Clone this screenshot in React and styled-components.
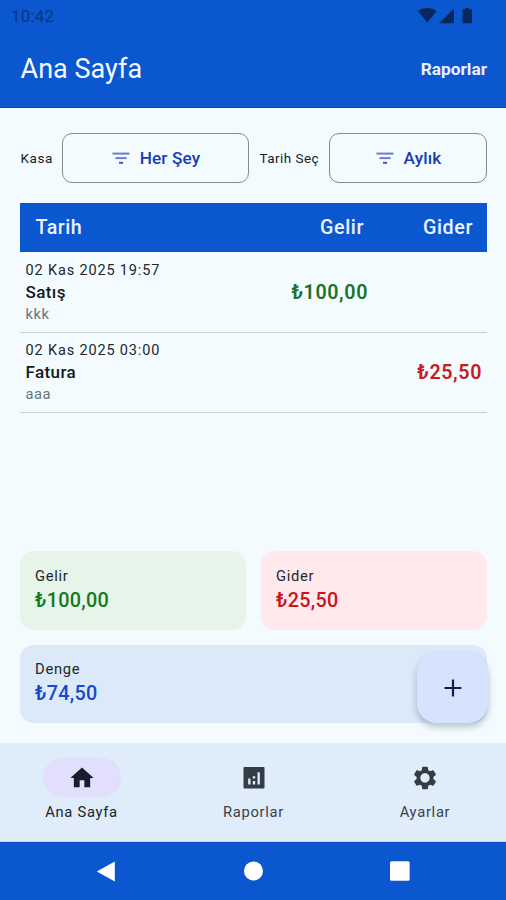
import React from "react";
import styled, { createGlobalStyle } from "styled-components";

const GlobalStyle = createGlobalStyle`
  * { box-sizing: border-box; }
  body { margin: 0; background: #f3fbff; }
`;

const blue = "#0a57d0";

const Screen = styled.div`
  width: 506px;
  height: 900px;
  display: flex;
  flex-direction: column;
  background: #f3fbff;
  font-family: Roboto, "Noto Sans", sans-serif;
  color: #1b2024;
  overflow: hidden;
`;

const Text = styled.span`
  display: block;
  white-space: nowrap;
  font-size: ${(p) => p.$size}px;
  line-height: ${(p) => p.$line || 20}px;
  font-weight: ${(p) => p.$weight || 400};
  letter-spacing: ${(p) => p.$track || 0}px;
  color: ${(p) => p.$color || "inherit"};
`;

const Header = styled.header`
  height: 108px;
  flex: none;
  background: ${blue};
  border-bottom: 1px solid #0747bd;
`;

const StatusBar = styled.div`
  height: 32px;
  padding: 0 33px 0 11px;
  display: flex;
  justify-content: space-between;
  align-items: center;
`;

const AppBar = styled.div`
  height: 74px;
  padding: 0 19px 0 20.5px;
  display: flex;
  justify-content: space-between;
  align-items: center;
`;

const Main = styled.main`
  flex: 1;
  min-height: 0;
  padding: 25px 19px 20px 20px;
  display: flex;
  flex-direction: column;
`;

const Filters = styled.div`
  display: grid;
  grid-template-columns: 42px 187px 80px 158px;
  align-items: center;
  height: 50px;
`;

const FilterLabel = styled(Text)`
  padding-left: ${(p) => p.$inset || 0}px;
`;

const FilterButton = styled.button`
  height: 50px;
  padding: 0 0 1px 1px;
  border: 1px solid #858a8c;
  border-radius: 10px;
  background: transparent;
  display: flex;
  align-items: center;
  justify-content: center;
  gap: 10px;
  font-family: inherit;
  color: #173db5;
`;

const TableHead = styled.div`
  margin-top: 20px;
  height: 49px;
  flex: none;
  background: ${blue};
  color: #eef3ff;
  padding: 0 14px 0 15.5px;
  display: grid;
  grid-template-columns: 1fr 100px 109px;
  align-items: center;
  text-align: right;

  & > :first-child { text-align: left; }
`;

const Row = styled.div`
  height: ${(p) => p.$height}px;
  flex: none;
  padding: ${(p) => p.$top}px 5px 0 5.5px;
  display: grid;
  grid-template-columns: 1fr 110px 114px;
  align-items: start;
  border-bottom: 1px solid #c8d0d5;
`;

const Amount = styled(Text)`
  text-align: right;
  padding-top: 22px;
`;

const Spacer = styled.div`
  flex: 1;
`;

const Cards = styled.div`
  display: grid;
  grid-template-columns: 226px 226px;
  gap: 15px;
  position: relative;
`;

const Card = styled.section`
  height: ${(p) => (p.$wide ? 78 : 79)}px;
  border-radius: 14px;
  background: ${(p) => p.$bg};
  padding: ${(p) => (p.$wide ? 14 : 15)}px 15px 0;
  grid-column: ${(p) => (p.$wide ? "1 / -1" : "auto")};
`;

const Fab = styled.button`
  position: absolute;
  right: -1px;
  bottom: 0;
  width: 71px;
  height: 70px;
  padding: 0;
  border: 0;
  border-radius: 20px;
  background: #d5e3ff;
  box-shadow: 0 4px 6px rgba(20, 40, 60, 0.2), 0 3px 10px rgba(20, 40, 60, 0.08);
  display: flex;
  align-items: center;
  justify-content: center;
`;

const Tabs = styled.nav`
  height: 99px;
  flex: none;
  background: #dfecf9;
  padding-top: 15px;
  display: grid;
  grid-template-columns: 163px 181px 162px;
  border-bottom: 1px solid #c5d9f3;
`;

const Tab = styled.div`
  display: flex;
  flex-direction: column;
  align-items: center;
  gap: 5px;
`;

const Pill = styled.div`
  width: 78px;
  height: 39px;
  border-radius: 20px;
  background: ${(p) => (p.$active ? "#e1dffc" : "transparent")};
  display: flex;
  align-items: center;
  justify-content: center;
`;

const SystemBar = styled.footer`
  height: 58px;
  flex: none;
  background: ${blue};
  border-top: 1px solid #0a4cc0;
  padding: 0 96px 1px;
  display: flex;
  align-items: center;
  justify-content: space-between;
`;

const FilterIcon = () => (
  <svg width="18" height="14" viewBox="0 0 18 14" fill="none" stroke="#6c7bd0" strokeWidth="2">
    <path d="M0.5 2.6H17.5" />
    <path d="M3.5 7.1H14.5" />
    <path d="M7 11.8H11" stroke="#3c55c4" />
  </svg>
);

const StatusIcons = () => (
  <svg width="55" height="18" viewBox="0 0 55 18" fill="#07275d">
    <path d="M0 4.1C5.4-.2 13.2-.2 18.6 4.1L9.3 15.5Z" />
    <path d="M36 1.5V16.3H21Z" />
    <path d="M47 1H51V2.2H54V16.3H44.5V2.2H47Z" />
  </svg>
);

const ICONS = {
  home: "M10 20v-6h4v6h5v-8h3L12 3 2 12h3v8z",
  chart:
    "M20.3 2.5H3.7c-.4 0-.7.3-.7.7v17.100c0 .4.3.7.7.7h16.600c.4 0 .7-.3.7-.7V3.200c0-.4-.3-.7-.7-.7zM9 17.500H7v-5h2v5zm4 0h-2v-3h2v3zm0-5h-2v-2h2v2zm4 5h-2V7h2v10.500z",
  gear: "M19.140 12.940c.04-.3.060-.61.060-.94 0-.32-.02-.64-.07-.94l2.030-1.580c.18-.14.230-.41.120-.61l-1.920-3.320c-.12-.22-.37-.29-.59-.22l-2.390.96c-.5-.38-1.030-.7-1.620-.94l-.36-2.540c-.04-.24-.24-.41-.48-.41h-3.840c-.24 0-.43.170-.47.410l-.36 2.540c-.59.240-1.130.570-1.620.940l-2.390-.96c-.22-.08-.47 0-.59.220L2.740 8.870c-.12.210-.08.470.120.610l2.030 1.580c-.05.3-.09.630-.09.940s.02.640.070.940l-2.030 1.580c-.18.140-.23.410-.12.610l1.920 3.320c.12.220.37.290.59.220l2.390-.96c.5.380 1.030.7 1.620.940l.36 2.540c.05.240.24.410.48.410h3.840c.24 0 .44-.17.470-.41l.36-2.540c.59-.24 1.130-.56 1.620-.94l2.390.960c.22.080.47 0 .59-.22l1.920-3.320c.12-.22.070-.47-.12-.61l-2.010-1.580zM12 16c-2.200 0-4-1.800-4-4s1.800-4 4-4 4 1.800 4 4-1.800 4-4 4z",
};

const TabIcon = ({ name, color }) => (
  <svg width="28" height="28" viewBox="0 0 24 24" fill={color}>
    <path d={ICONS[name]} />
  </svg>
);

const rows = [
  { date: "02 Kas 2025 19:57", name: "Satış", note: "kkk", income: "₺100,00", height: 81, top: 9 },
  { date: "02 Kas 2025 03:00", name: "Fatura", note: "aaa", expense: "₺25,50", height: 80, top: 8 },
];

const cards = [
  { label: "Gelir", value: "₺100,00", bg: "#e7f4e9", color: "#137a20" },
  { label: "Gider", value: "₺25,50", bg: "#ffe9ec", color: "#c9141c" },
  { label: "Denge", value: "₺74,50", bg: "#dbe9f9", color: "#1848cc", wide: true },
];

const tabs = [
  { label: "Ana Sayfa", icon: "home", active: true },
  { label: "Raporlar", icon: "chart" },
  { label: "Ayarlar", icon: "gear" },
];

export default function App() {
  return (
    <>
      <GlobalStyle />
      <Screen>
        <Header>
          <StatusBar>
            <Text $size={17} $track={0.2} $color="#08357f">10:42</Text>
            <StatusIcons />
          </StatusBar>
          <AppBar>
            <Text $size={27} $line={34} $track={0.02} $color="#f6f8ff">Ana Sayfa</Text>
            <Text $size={17.3} $weight={700} $color="#eaf0ff">Raporlar</Text>
          </AppBar>
        </Header>
        <Main>
          <Filters>
            <FilterLabel $size={13.5} $track={0.6} $inset={0.5}>Kasa</FilterLabel>
            <FilterButton>
              <FilterIcon />
              <Text $size={17.2} $weight={500} $track={0.15}>Her Şey</Text>
            </FilterButton>
            <FilterLabel $size={13.5} $track={0.45} $inset={10.5}>Tarih Seç</FilterLabel>
            <FilterButton>
              <FilterIcon />
              <Text $size={17.2} $weight={500} $track={0.15}>Aylık</Text>
            </FilterButton>
          </Filters>
          <TableHead>
            <Text $size={19.7} $weight={500} $track={0.5}>Tarih</Text>
            <Text $size={19.7} $weight={500} $track={0.6}>Gelir</Text>
            <Text $size={19.7} $weight={500} $track={0.6}>Gider</Text>
          </TableHead>
          {rows.map((r) => (
            <Row key={r.date} $height={r.height} $top={r.top}>
              <div>
                <Text $size={14.5} $track={0.85} $color="#22282c">{r.date}</Text>
                <Text $size={17} $line={22} $weight={500} $track={0.4} $color="#14191c">{r.name}</Text>
                <Text $size={14.75} $line={22} $track={0.5} $color="#6c7478">{r.note}</Text>
              </div>
              <Amount $size={19.7} $weight={600} $track={0.6} $color="#1c7428">{r.income}</Amount>
              <Amount $size={19.7} $weight={600} $track={0.6} $color="#c51c22">{r.expense}</Amount>
            </Row>
          ))}
          <Spacer />
          <Cards>
            {cards.map((c) => (
              <Card key={c.label} $bg={c.bg} $wide={c.wide}>
                <Text $size={14.75} $track={0.7} $color="#22282c">{c.label}</Text>
                <Text $size={19.8} $line={30} $weight={500} $track={0.3} $color={c.color}>{c.value}</Text>
              </Card>
            ))}
            <Fab aria-label="Ekle">
              <svg width="18" height="18" viewBox="0 0 18 18" stroke="#10204a" strokeWidth="2.2">
                <path d="M9 0.5V17.5M0.5 9H17.5" />
              </svg>
            </Fab>
          </Cards>
        </Main>
        <Tabs>
          {tabs.map((t) => (
            <Tab key={t.label}>
              <Pill $active={t.active}>
                <TabIcon name={t.icon} color={t.active ? "#1a1b2e" : "#343d45"} />
              </Pill>
              <Text $size={14.75} $track={0.7} $color={t.active ? "#1c2228" : "#39424a"}>
                {t.label}
              </Text>
            </Tab>
          ))}
        </Tabs>
        <SystemBar>
          <svg width="19" height="21" viewBox="0 0 19 21" fill="#fff">
            <path d="M18.8 0.5V20.5L0.8 10.5Z" />
          </svg>
          <svg width="20" height="20" viewBox="0 0 20 20" fill="#fff">
            <circle cx="10.5" cy="10" r="9.5" />
          </svg>
          <svg width="20" height="20" viewBox="0 0 20 20" fill="#fff">
            <rect x="0" y="0.2" width="19.6" height="19.6" rx="1.5" />
          </svg>
        </SystemBar>
      </Screen>
    </>
  );
}
